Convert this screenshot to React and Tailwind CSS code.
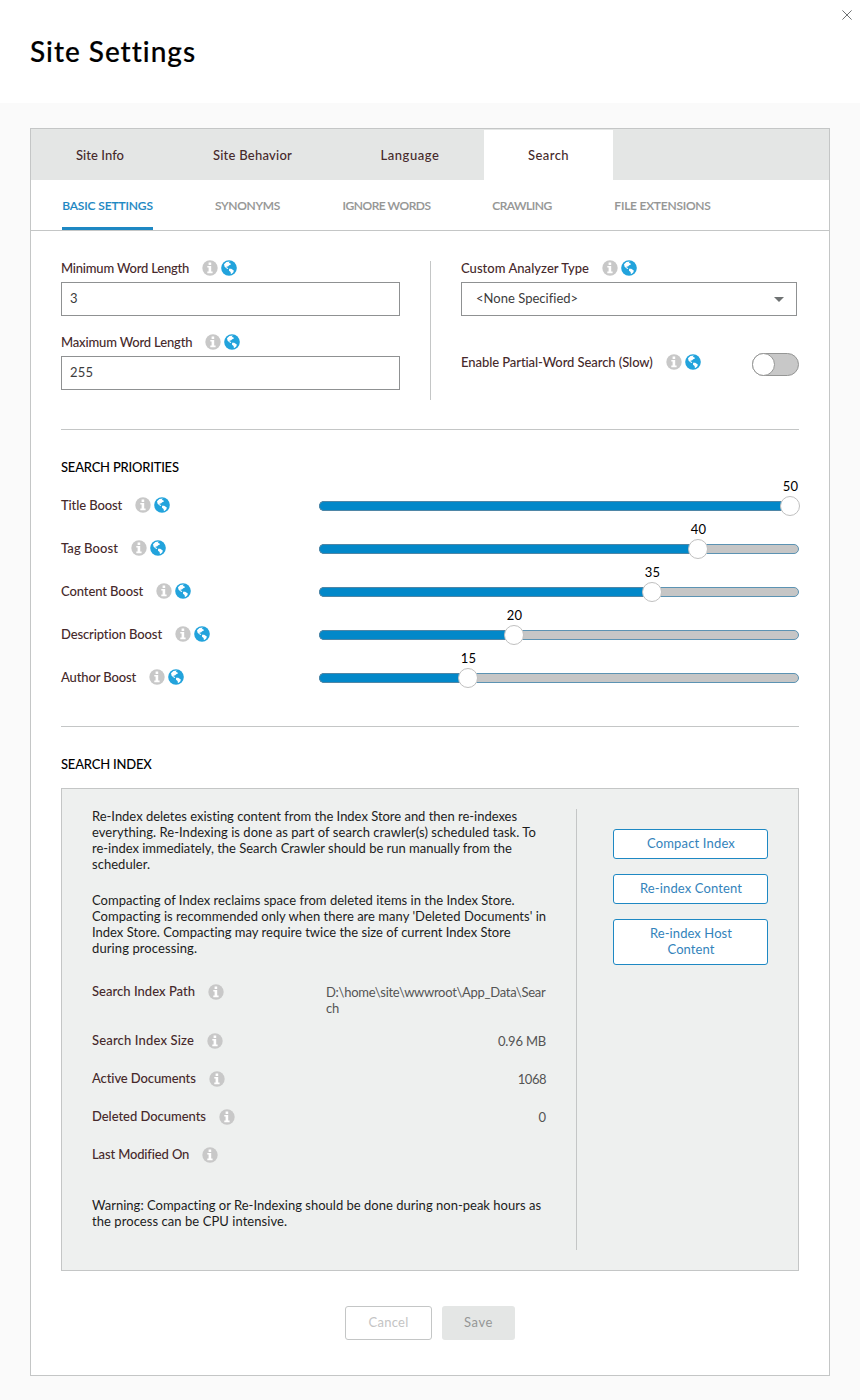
const LABEL = "font-medium text-[#46292b]";

function InfoIcon() {
  return (
    <svg viewBox="0 0 16 16" className="h-4 w-4 shrink-0">
      <circle cx="8" cy="8" r="7.7" fill="#c8c8c8" />
      <path
        fill="#fff"
        d="M6.6 2.6h2.6v2.3H6.6zM5.3 6h3.9v5.6h1.4v1.6H5.3v-1.6h1.3V7.6H5.3z"
      />
    </svg>
  );
}

function GlobeIcon() {
  return (
    <svg viewBox="0 0 16 16" className="h-4 w-4 shrink-0">
      <circle cx="8" cy="8" r="7.8" fill="#22a3dc" />
      <path
        fill="#fff"
        d="M3 4.2 5.4 2 8.8 1.6 7.8 2.9 9.4 3.3 9.8 4.8 8.2 5.2 7 6.4 5.7 6.5 5.5 7.5 6.7 7.8 7.3 9 6 8.7 3.6 6.8ZM8.1 8.7 10.2 8.8 12.8 10.5 12.4 12.2 10.8 13.8 9.9 14 9.6 12 8 10.7Z"
      />
    </svg>
  );
}

function Label({ text, cls, globe = true }) {
  return (
    <div className="flex h-4 items-center">
      <span className={`${LABEL} ${cls} -mt-0.5 whitespace-nowrap leading-4`}>{text}</span>
      <span className={`ml-[13px] flex items-center gap-[3px] ${globe ? "-mt-0.5" : ""}`}>
        <InfoIcon />
        {globe && <GlobeIcon />}
      </span>
    </div>
  );
}

const tabs = [
  { name: "Site Info", cls: "w-[138px] pt-[3px] tracking-[0.07px]" },
  { name: "Site Behavior", cls: "w-[167px] pt-[3px] tracking-[0.25px]" },
  { name: "Language", cls: "w-[148px] pt-[3px] tracking-[0.55px]" },
  { name: "Search", cls: "mt-px w-[129px] bg-white pt-[2px] tracking-[0.44px]" },
];

const subTabs = [
  { name: "BASIC SETTINGS", cls: "w-[91px] mr-[62px] tracking-[-0.14px]" },
  { name: "SYNONYMS", cls: "w-[65px] mr-[62px] tracking-[-0.32px]" },
  { name: "IGNORE WORDS", cls: "w-[89px] mr-[61px] tracking-[-0.48px]" },
  { name: "CRAWLING", cls: "w-[60px] mr-[62px] tracking-[-0.46px]" },
  { name: "FILE EXTENSIONS", cls: "w-[97px] tracking-[-0.24px]" },
];

const boosts = [
  { name: "Title Boost", value: 50, cls: "w-[61px] tracking-[-0.11px]" },
  { name: "Tag Boost", value: 40, cls: "w-[57px] tracking-[0.08px]" },
  { name: "Content Boost", value: 35, cls: "w-[82px] tracking-[-0.09px]" },
  { name: "Description Boost", value: 20, cls: "w-[101px] tracking-[-0.12px]" },
  { name: "Author Boost", value: 15, cls: "w-[75px] tracking-[-0.13px]" },
];

const stats = [
  { name: "Search Index Size", value: "0.96 MB", cls: "w-[102px] tracking-[0.16px]", vcls: "tracking-[-0.2px]" },
  { name: "Active Documents", value: "1068", cls: "w-[104px] tracking-[-0.1px]", vcls: "tracking-[-0.5px]" },
  { name: "Deleted Documents", value: "0", cls: "w-[114px] tracking-[-0.04px]", vcls: "" },
  { name: "Last Modified On", value: "", cls: "w-[97px] tracking-[-0.14px]", vcls: "" },
];

function Slider({ value }) {
  const center = 11 + value * 9.2;
  return (
    <div className="relative h-[10px] w-[480px] rounded-full border border-[#5c93b3] bg-[#c6c6c6]">
      <div
        className="absolute -top-px -left-px h-[10px] rounded-l-full border-y border-l border-[#4f86a6] bg-[#0288c9]"
        style={{ width: center }}
      />
      <div
        className="absolute -top-[6px] -ml-[11px] h-5 w-5 rounded-full border border-[#c0c0c0] bg-white"
        style={{ left: center }}
      />
      <span
        className="absolute -top-[24px] -ml-[16px] w-[31px] text-center leading-4 tracking-[0.2px] text-black"
        style={{ left: center }}
      >
        {value}
      </span>
    </div>
  );
}

function IndexButton({ children, cls }) {
  return (
    <button
      className={`w-[155px] rounded-[3px] border border-[#1e88c3] bg-white pb-[2px] pl-px text-center leading-4 text-[#3383bb] ${cls}`}
    >
      {children}
    </button>
  );
}

export default function App() {
  return (
    <div className="h-[1400px] w-[860px] overflow-hidden bg-[#fafafa] font-['Lato',sans-serif] text-[13px] [font-variant-ligatures:none]">
      <header className="flex h-[103px] justify-between bg-white">
        <h1 className="pt-[33px] pl-[30px] text-[28px] leading-9 font-medium tracking-[0.98px] text-black [-webkit-text-stroke:0.2px]">
          Site Settings
        </h1>
        <svg viewBox="0 0 10 10" className="mt-[10px] mr-2 h-[10px] w-[10px]">
          <path d="M.4.4 9.6 9.6M9.6.4.4 9.6" stroke="#6f7273" strokeWidth="1" fill="none" />
        </svg>
      </header>

      <main className="mx-[30px] mt-[25px] h-[1248px] border border-[#c4c6c6] bg-white">
        <nav className="flex h-[51px] bg-[#e4e6e5]">
          {tabs.map((t) => (
            <div key={t.name} className={`flex items-center justify-center ${LABEL} ${t.cls}`}>
              {t.name}
            </div>
          ))}
        </nav>

        <nav className="flex h-[51px] border-b border-[#c4c6c6] pl-[31px] text-[12px] font-semibold [-webkit-text-stroke:0.1px]">
          {subTabs.map((t, i) => (
            <div
              key={t.name}
              className={`flex items-center justify-center border-b-[3px] pt-[4px] whitespace-nowrap ${t.cls} ${
                i === 0 ? "border-[#1e88c3] text-[#1e88c3]" : "border-transparent text-[#959695]"
              }`}
            >
              {t.name}
            </div>
          ))}
        </nav>

        <div className="px-[30px]">
          <section className="flex h-[199px] border-b border-[#c4c6c6] pt-[30px]">
            <div className="w-[339px]">
              <Label text="Minimum Word Length" cls="w-[128px] tracking-[-0.2px]" />
              <div className="mt-[5px] flex h-[34px] items-center border border-[#8f9192] pl-2 text-[#3c3c3c]">3</div>
              <div className="h-[19px]" />
              <Label text="Maximum Word Length" cls="w-[131px] tracking-[-0.17px]" />
              <div className="mt-[5px] flex h-[34px] items-center border border-[#8f9192] pl-2 tracking-[0.2px] text-[#3c3c3c]">
                255
              </div>
            </div>
            <div className="ml-[30px] h-[139px] w-px bg-[#c4c6c6]" />
            <div className="ml-[30px] w-[338px]">
              <Label text="Custom Analyzer Type" cls="w-[128px] tracking-[0.04px]" />
              <div className="mt-[5px] flex h-[34px] w-[336px] items-center justify-between border border-[#8f9192] pr-[12px] pl-[14px] text-[#3c3c3c]">
                <span className="tracking-[0.02px]">&lt;None Specified&gt;</span>
                <svg viewBox="0 0 10 5" className="h-[5px] w-[10px]">
                  <path d="M0 0h10L5 5z" fill="#6f7273" />
                </svg>
              </div>
              <div className="mt-[37px] flex items-start justify-between">
                <div className="pt-[2px]">
                  <Label text="Enable Partial-Word Search (Slow)" cls="w-[192px] tracking-[-0.07px]" />
                </div>
                <div className="h-[23px] w-[47px] rounded-full border border-[#959695] bg-[#c8c8c8]">
                  <div className="-mt-px -ml-px h-[23px] w-[23px] rounded-full border border-[#959695] bg-white" />
                </div>
              </div>
            </div>
          </section>

          <section className="h-[297px] border-b border-[#c4c6c6] pt-[29px]">
            <h2 className="leading-4 font-medium tracking-[-0.22px] text-black">SEARCH PRIORITIES</h2>
            <div className="mt-[9px]">
              {boosts.map((b) => (
                <div key={b.name} className="flex h-[43px] items-center justify-between">
                  <Label text={b.name} cls={b.cls} />
                  <Slider value={b.value} />
                </div>
              ))}
            </div>
          </section>

          <section className="pt-[29px]">
            <h2 className="leading-4 font-medium tracking-[-0.2px] text-black">SEARCH INDEX</h2>
            <div className="mt-[16px] flex h-[483px] border border-[#c4c6c6] bg-[#eef0ef] pt-[19px] pl-[30px]">
              <div className="w-[454px] leading-4 whitespace-nowrap text-[#1c1c1c]">
                <p className="tracking-[-0.02px]">Re-Index deletes existing content from the Index Store and then re-indexes</p>
                <p className="tracking-[0.04px]">everything. Re-Indexing is done as part of search crawler(s) scheduled task. To</p>
                <p className="tracking-[-0.02px]">re-index immediately, the Search Crawler should be run manually from the</p>
                <p className="tracking-[0.03px]">scheduler.</p>
                <p className="mt-5 tracking-[0.02px]">
                  Compacting of Index reclaims space from deleted items in the Index Store.
                </p>
                <p className="tracking-[0.02px]">Compacting is recommended only when there are many 'Deleted Documents' in</p>
                <p>Index Store. Compacting may require twice the size of current Index Store</p>
                <p className="tracking-[0.1px]">during processing.</p>

                <div className="mt-[28px] flex h-[49px] justify-between">
                  <Label text="Search Index Path" cls="w-[103px] tracking-[0.03px]" globe={false} />
                  <div className="w-[220px] tracking-[-0.28px] text-[#545454]">
                    D:\home\site\wwwroot\App_Data\Sear
                    <br />
                    ch
                  </div>
                </div>
                {stats.map((s) => (
                  <div key={s.name} className="flex h-[38px] justify-between">
                    <Label text={s.name} cls={s.cls} globe={false} />
                    <span className={`text-[#545454] ${s.vcls}`}>{s.value}</span>
                  </div>
                ))}

                <p className="mt-[12px] tracking-[0.01px]">
                  Warning: Compacting or Re-Indexing should be done during non-peak hours as
                </p>
                <p className="tracking-[0.06px]">the process can be CPU intensive.</p>
              </div>
              <div className="mt-px ml-[30px] h-[441px] w-px bg-[#c4c6c6]" />
              <div className="ml-9 flex flex-col gap-[15px] pt-[21px]">
                <IndexButton cls="h-[30px] tracking-[0.16px]">Compact Index</IndexButton>
                <IndexButton cls="h-[30px] tracking-[0.12px]">Re-index Content</IndexButton>
                <IndexButton cls="h-[46px] tracking-[0.08px]">
                  Re-index Host
                  <br />
                  Content
                </IndexButton>
              </div>
            </div>
          </section>

          <div className="mt-[35px] flex justify-center gap-[10px]">
            <button className="h-[34px] w-[87px] rounded-[3px] border border-[#c4c6c6] bg-white tracking-[0.28px] text-[#c4c4c4]">
              Cancel
            </button>
            <button className="h-[34px] w-[73px] rounded-[3px] bg-[#e4e6e5] tracking-[0.55px] text-[#959695]">
              Save
            </button>
          </div>
        </div>
      </main>
    </div>
  );
}
